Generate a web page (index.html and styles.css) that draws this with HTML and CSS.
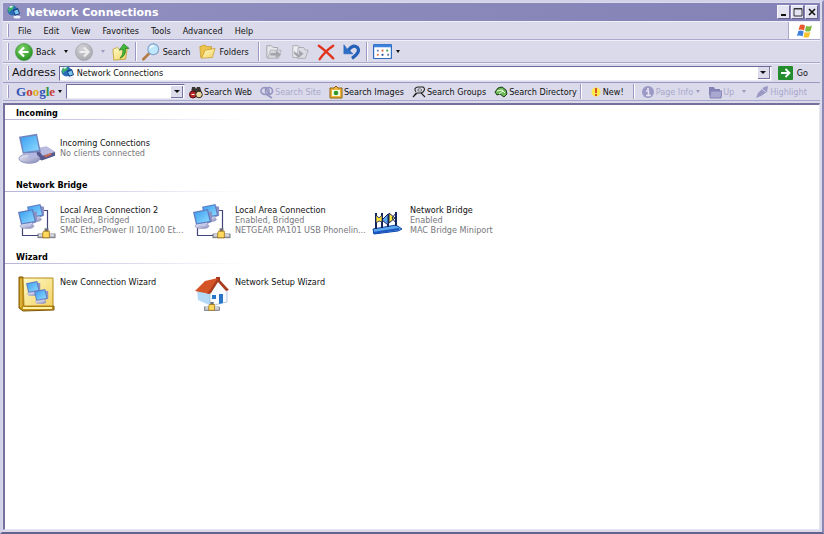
FILE: index.html
```html
<!DOCTYPE html>
<html lang="en">
<head>
<meta charset="utf-8">
<title>Network Connections</title>
<link rel="stylesheet" href="styles.css">
</head>
<body>
<svg class="defs" width="0" height="0" aria-hidden="true">
  <defs>
    <linearGradient id="screen" x1="0" y1="0" x2="1" y2="1"><stop offset="0" stop-color="#3a9df0"/><stop offset="1" stop-color="#8fdcff"/></linearGradient>
    <linearGradient id="shell" x1="0" y1="0" x2="1" y2="1"><stop offset="0" stop-color="#f2f3fc"/><stop offset="1" stop-color="#8285b5"/></linearGradient>
    <radialGradient id="green" cx=".4" cy=".3" r=".8"><stop offset="0" stop-color="#7fd468"/><stop offset="1" stop-color="#1c8a1c"/></radialGradient>
    <radialGradient id="gray" cx=".4" cy=".3" r=".8"><stop offset="0" stop-color="#d4d4d8"/><stop offset="1" stop-color="#a2a2aa"/></radialGradient>
    <linearGradient id="paper" x1="0" y1="0" x2="1" y2="1"><stop offset="0" stop-color="#fffbc8"/><stop offset="1" stop-color="#f3d263"/></linearGradient>
    <symbol id="globe" viewBox="0 0 14 14">
      <circle cx="5.5" cy="5.5" r="5" fill="#2a6cb8"/><path d="M1 4Q3 0 7 1L6 4 3 6 2 8Z" fill="#3fb36a"/><path d="M2 2Q4 0 6 1L4 3Z" fill="#e0f6ee"/>
      <path d="M6 5L11 3 13 9 8 11Z" fill="#123c78"/><path d="M7 6L10.500 4.500 12 8.500 8.500 9.500Z" fill="#7cc8f4"/><ellipse cx="10" cy="12" rx="3.500" ry="1.500" fill="#eef0fa"/>
    </symbol>
    <symbol id="pc" viewBox="0 0 20 20">
      <path d="M14 2L19 3 19 13 14 15Z" fill="#8f93c4"/><ellipse cx="9" cy="17" rx="7" ry="2.800" fill="url(#shell)" stroke="#9699c2" stroke-width=".6"/>
      <path d="M7 13H13V17H8Z" fill="#c5c8e8"/><path d="M0 3L15 0 18 13 3 15.500Z" fill="#5f7cc0"/><path d="M1.500 4L14 1.500 16.500 12 4 14.200Z" fill="url(#screen)"/>
    </symbol>
    <symbol id="plug" viewBox="0 0 20 12">
      <rect x="1" y="6" width="18" height="4" fill="#b9bcc4" stroke="#50535e" stroke-width=".7"/><path d="M2 7H18" stroke="#fff"/><rect x="8" y="0" width="4" height="5" fill="#6f7278"/><path d="M7 3H13V10H6V5Z" fill="#ffd95c" stroke="#98660c" stroke-width=".8"/>
    </symbol>
    <symbol id="lan" viewBox="0 0 38 36">
      <path d="M20 6.500H29.500V26M4.500 24V31.500H20" fill="none" stroke="#42447a" stroke-width="1.200"/>
      <use href="#pc" x="9" y="0" width="18" height="18"/><use href="#pc" x="0" y="5" width="20" height="20"/><use href="#plug" x="19" y="24" width="19" height="12"/>
    </symbol>
    <symbol id="folder" viewBox="0 0 20 18">
      <path d="M2 3L8 1 9 3 15 3 15 13 3 15Z" fill="#ecc44c" stroke="#c2901e" stroke-width=".7"/><path d="M4 16L8 7 19 5 16 15Z" fill="url(#paper)" stroke="#c2901e" stroke-width=".7"/>
    </symbol>
  </defs>
</svg>
<main class="window">
  <header class="titlebar">
    <svg class="i14"><use href="#globe"/></svg>
    <h1>Network Connections</h1>
    <div class="winbtns">
      <button aria-label="Minimize"><svg viewBox="0 0 10 10"><path d="M2 8H7" stroke="#111" stroke-width="2"/></svg></button>
      <button aria-label="Maximize"><svg viewBox="0 0 10 10"><path d="M1 1.500H9V9H1ZM1 2H9" fill="none" stroke="#333"/></svg></button>
      <button aria-label="Close"><svg viewBox="0 0 10 10"><path d="M2 2L8 8M8 2L2 8" stroke="#111" stroke-width="1.600"/></svg></button>
    </div>
  </header>

  <nav class="bar menubar" aria-label="Menu">
    <span class="grip"></span>
    <div class="menus">
      <button>File</button><button>Edit</button><button>View</button><button>Favorites</button><button>Tools</button><button>Advanced</button><button>Help</button>
    </div>
    <div class="flag"><svg width="16" height="14" viewBox="0 0 16 14"><path d="M3 1Q5 0 8 1.500L7 6.500Q4 5 1.500 6Z" fill="#e8582c"/><path d="M9 2Q12 3 15 1.500L13.500 7Q11 8 8 7Z" fill="#7cb93c"/><path d="M1.300 7Q4 6 6.700 7.500L5.500 12.500Q3 11 0 12Z" fill="#3f80dc"/><path d="M7.700 8Q10 9 13.300 8L12 13Q9 14 6.500 13Z" fill="#f6c32c"/></svg></div>
  </nav>

  <div class="bar toolbar" role="toolbar" aria-label="Standard buttons">
    <span class="grip"></span>
    <button class="tool"><svg class="i18" viewBox="0 0 20 20"><circle cx="10" cy="10" r="9.500" fill="url(#green)" stroke="#32872c" stroke-width=".6"/><path d="M10 5L5 10 10 15M5.500 10H15" fill="none" stroke="#fff" stroke-width="2.400"/></svg>Back</button>
    <button class="drop" aria-label="Back history"></button>
    <button class="tool" aria-label="Forward" disabled><svg class="i18" viewBox="0 0 20 20"><circle cx="10" cy="10" r="9.500" fill="url(#gray)" stroke="#9b9ba2" stroke-width=".6"/><path d="M10 5L15 10 10 15M14.500 10H5" fill="none" stroke="#eee" stroke-width="2.400"/></svg></button>
    <button class="drop" aria-label="Forward history" disabled></button>
    <button class="tool" aria-label="Up"><svg class="i18" viewBox="0 0 20 20"><path d="M1 7L6 5 8 7 17 6 15 18 2 19Z" fill="url(#paper)" stroke="#bd951e" stroke-width=".8"/><path d="M9 17Q13 13 12 7L8 8 13 1 19 6 15 6Q16 14 9 17Z" fill="#42b63a" stroke="#177817" stroke-width=".7"/></svg></button>
    <span class="sep"></span>
    <button class="tool"><svg class="i18" viewBox="0 0 20 20"><path d="M1.500 18L8 11.500" stroke="#b47b45" stroke-width="3" stroke-linecap="round"/><circle cx="12.500" cy="7" r="6" fill="#bfe7fb" stroke="#7da1cb" stroke-width="1.200"/><path d="M9 6Q10 3 13 3" stroke="#fff" stroke-width="1.500" fill="none"/></svg>Search</button>
    <button class="tool"><svg class="i18"><use href="#folder"/></svg>Folders</button>
    <div class="tools">
      <span class="sep"></span>
      <button class="tool" aria-label="Move to" disabled><svg class="i18" viewBox="0 0 20 20"><path d="M2 3H7L9 5H14V16H2Z" fill="#e6e6ea" stroke="#a2a2aa"/><path d="M3 17L6 8H18L15 17Z" fill="#d6d6dc" stroke="#a2a2aa" stroke-width=".7"/><path d="M6 11H12V8L18 13 12 17V14H6Z" fill="#a4a4ac"/></svg></button>
      <button class="tool" aria-label="Copy to" disabled><svg class="i18" viewBox="0 0 20 20"><path d="M2 3H8L11 6V16H2Z" fill="#ececf0" stroke="#a8a8b0"/><path d="M8 5H14L16 8H19L16 17H7Z" fill="#dcdce2" stroke="#a8a8b0"/><path d="M3 9L9 13V8L14 12 9 16 4 13Z" fill="#a4a4ac"/></svg></button>
      <button class="tool" aria-label="Delete"><svg class="i18" viewBox="0 0 20 20"><path d="M2 3Q9 8 18 17M18 3Q9 9 3 18" fill="none" stroke="#e0341c" stroke-width="2.600" stroke-linecap="round"/></svg></button>
      <button class="tool" aria-label="Undo"><svg class="i18" viewBox="0 0 20 20"><path d="M6 8Q11 1 16 5 20 10 10 17" fill="none" stroke="#2360b8" stroke-width="3.600"/><path d="M1 2L1 12H11L8 9 4 6Z" fill="#2f6ec8" stroke="#2360b8" stroke-width=".7"/></svg></button>
      <span class="sep"></span>
      <button class="tool" aria-label="Views"><svg width="19" height="15" viewBox="0 0 20 16"><rect x=".5" y=".5" width="19" height="15" rx="1" fill="#fff" stroke="#2d6cc0" stroke-width="1.300"/><path d="M1 2H19" stroke="#3c82dc" stroke-width="3"/><path d="M4 7H6M15 11.500H17" stroke="#6d83a8" stroke-width="2"/><path d="M4 11.500H6" stroke="#e47444" stroke-width="2"/><path d="M9 7H11" stroke="#d85c40" stroke-width="2"/><path d="M9 11.500H11" stroke="#24479c" stroke-width="2"/><path d="M14 7H16" stroke="#3ba04c" stroke-width="2"/></svg></button>
    </div>
    <button class="drop tight" aria-label="Choose view"></button>
  </div>

  <form class="bar addressbar">
    <span class="grip"></span>
    <label for="address">Address</label>
    <div class="field grow"><svg class="i14"><use href="#globe"/></svg><input id="address" value="Network Connections"><button type="button" class="combo" aria-label="Address list"></button></div>
    <button type="button" class="go"><svg width="15" height="14" viewBox="0 0 15 14"><rect width="15" height="14" rx="1" fill="#238c2c"/><path d="M3 7H11M7.500 3L11.500 7 7.500 11" fill="none" stroke="#fff" stroke-width="1.800"/></svg>Go</button>
  </form>

  <form class="bar googlebar">
    <span class="grip"></span>
    <button type="button" class="google" aria-label="Google"><span class="b">G</span><span class="r">o</span><span class="y">o</span><span class="b">g</span><span class="g">l</span><span class="r">e</span></button>
    <button type="button" class="drop tight" aria-label="Google menu"></button>
    <div class="field query"><input aria-label="Search terms"><button type="button" class="combo" aria-label="Recent searches"></button></div>
    <div class="links">
      <button type="button"><svg class="i14" viewBox="0 0 14 14"><path d="M2 8L3 2H6L7 4 8 2H11L13 8 11 11H3Z" fill="#3a3430"/><circle cx="4" cy="9.500" r="3.500" fill="#bc2424" stroke="#501010"/><circle cx="10" cy="9.500" r="3.300" fill="#ebd9a0" stroke="#302820"/><path d="M2.500 9.500H5.500" stroke="#fff"/></svg>Search Web</button>
      <button type="button" disabled><svg class="i14" viewBox="0 0 14 14"><g fill="none" stroke="#9795c2" stroke-width="1.700"><ellipse cx="5" cy="6" rx="4" ry="3.500"/><circle cx="9" cy="6" r="3.500"/><path d="M6 9L12 13M5 3L10 9"/></g></svg>Search Site</button>
      <button type="button"><svg class="i14" viewBox="0 0 14 14"><path d="M1 3H5L7 1 9 3H13V13H1Z" fill="#efb73c" stroke="#8c6010"/><rect x="3" y="5" width="8" height="6" fill="#f4ffe0"/><circle cx="7" cy="8" r="2.300" fill="#2c9a2c"/></svg>Search Images</button>
      <button type="button"><svg class="i14" viewBox="0 0 14 14"><path d="M4 7Q1 3 6 2H11Q14 4 11 7L9 8 13 12M9 8H5L1 12 4 8" fill="none" stroke="#222" stroke-width="1.100"/><path d="M6 4H9Q11 5 9 6H6Z" fill="#fff" stroke="#444" stroke-width=".7"/></svg>Search Groups</button>
      <button type="button"><svg class="i14" viewBox="0 0 14 14"><path d="M1 7L4 3 8 2 12 5 13 9 10 12 6 9 3 10Z" fill="#6fb958" stroke="#173c16"/><path d="M3 6L8 5 11 8M5 9L9 6" stroke="#e7ffe0" fill="none"/></svg>Search Directory</button>
    </div>
    <span class="sep"></span>
    <button type="button" class="new"><svg width="10" height="10" viewBox="0 0 10 10"><circle cx="5" cy="5" r="4.500" fill="#ffe94c"/><path d="M5 1V6M5 7V9" stroke="#d0301c" stroke-width="1.600"/></svg>New!</button>
    <span class="sep"></span>
    <button type="button" class="info" disabled><svg class="i14" viewBox="0 0 14 14"><circle cx="7" cy="7" r="6" fill="#9a98c5"/><path d="M7 3V5M5 6H7.500V10M5 10.500H10" stroke="#e6e5f3" stroke-width="1.600" fill="none"/></svg>Page Info</button>
    <button type="button" class="drop tight" disabled aria-label="Page info menu"></button>
    <button type="button" class="up" disabled><svg class="i14" viewBox="0 0 14 14"><path d="M1 12V2H6L7 4H12V6H3Z" fill="#8583b5"/><path d="M3 6H14L13 13H2Z" fill="#aaa8d0" stroke="#8583b5"/></svg>Up</button>
    <button type="button" class="drop wide" disabled aria-label="Up menu"></button>
    <button type="button" disabled><svg class="i14" viewBox="0 0 14 14"><path d="M1 13L3 8 9 2 13 1 12 7 6 11Z" fill="#9a98c5"/><path d="M7 4L11 7" stroke="#d5d4e8"/></svg>Highlight</button>
  </form>

  <section class="content">
    <h2>Incoming</h2>
    <ul class="tiles centered">
      <li><svg class="icon" viewBox="0 0 40 36"><path d="M21 17L31 15 39 20V24L25 29 17 25Z" fill="#55588c"/><path d="M20 16L30 14 39 20 26 24Z" fill="#b9bbdf"/><path d="M28 25L35 22" stroke="#d66b4c" stroke-width="2"/><ellipse cx="12" cy="27" rx="11" ry="5" fill="url(#shell)" stroke="#8f92bd"/><path d="M11 19H19L21 26 11 27Z" fill="#b4b8e0"/><path d="M1 4L20 1 24 20 5 22Z" fill="#7184bd"/><path d="M3 5L19 3 22 18 6 20Z" fill="url(#screen)"/></svg><div><a href="#">Incoming Connections</a><p>No clients connected</p></div></li>
    </ul>
    <h2>Network Bridge</h2>
    <ul class="tiles">
      <li><svg class="icon"><use href="#lan"/></svg><div><a href="#">Local Area Connection 2</a><p>Enabled, Bridged</p><p>SMC EtherPower II 10/100 Et...</p></div></li>
      <li><svg class="icon"><use href="#lan"/></svg><div><a href="#">Local Area Connection</a><p>Enabled, Bridged</p><p>NETGEAR PA101 USB Phonelin...</p></div></li>
      <li><svg class="icon" viewBox="0 0 38 36"><path d="M5 25L28 21 34 25 30 27 6 30Z" fill="#5ba6ea" stroke="#1146a8"/><path d="M5 29L31 25" stroke="#1a56c0" stroke-width="2"/><path d="M8 9V25M14 9V24M20 10V23M28 8V22" stroke="#14245c" stroke-width="2"/><path d="M8 11L11 14 14 11V18L11 17 8 19Z" fill="#ffe538" stroke="#14245c" stroke-width=".8"/><path d="M14 16L20 10V21Z" fill="#5ba6ea" stroke="#14245c"/><path d="M21 9L27 14 21 19Z" fill="#ffe538" stroke="#14245c"/><path d="M28 9L24 14 28 19" fill="none" stroke="#14245c"/></svg><div><a href="#">Network Bridge</a><p>Enabled</p><p>MAC Bridge Miniport</p></div></li>
    </ul>
    <h2>Wizard</h2>
    <ul class="tiles">
      <li><svg class="icon" viewBox="0 0 38 36"><path d="M1 1H5L6 30H36V34L5 35 1 32Z" fill="#c69319" stroke="#805908"/><path d="M5 2H35V30H6Z" fill="url(#paper)" stroke="#b58a16"/><path d="M5 32H34" stroke="#fff1a5" stroke-width="2"/><path d="M3 3V31" stroke="#efcf52"/><use href="#pc" x="8" y="5" width="15" height="15"/><use href="#pc" x="16" y="13" width="15" height="15"/></svg><div><a href="#">New Connection Wizard</a></div></li>
      <li><svg class="icon" viewBox="0 0 38 36"><path d="M23 1H27V12H23Z" fill="#a4341b"/><path d="M4 14L17 9 20 26 18 30 5 24Z" fill="#b4daf8"/><path d="M17 17L25 5 34 15V26L17 30Z" fill="#f8fbff" stroke="#99b4d8" stroke-width=".7"/><path d="M2 15L12 5 25 2 17 18Z" fill="#d55427"/><path d="M25 2L36 14 33 15 25 6 18 17 14 18Z" fill="#a93b1e"/><path d="M19 19H23V23H19ZM26 18H30V27L26 28Z" fill="#2776c8"/><use href="#plug" x="6" y="26" width="26" height="10"/></svg><div><a href="#">Network Setup Wizard</a></div></li>
    </ul>
  </section>
</main>
</body>
</html>
```

FILE: styles.css
```css
* { box-sizing: border-box; }
body {
  margin: 0;
  font: 9px/10px "DejaVu Sans Condensed", "DejaVu Sans", sans-serif;
  color: #111;
}
.defs { display: block; height: 0; }
.window {
  min-height: 100vh;
  display: flex;
  flex-direction: column;
  background: #dadaea;
  border: 2px solid #d2d1ea;
  border-right-color: #8a88b4;
  border-bottom-color: #65628e;
  padding: 1px 2px 2px 1px;
}
button {
  display: flex;
  align-items: center;
  gap: 1px;
  padding: 0;
  border: 0;
  background: none;
  color: inherit;
  font: inherit;
  white-space: nowrap;
}
button:disabled { color: #aaa8cc; }
svg { flex: none; display: block; }
.i14 { width: 14px; height: 14px; }
.i18 { width: 18px; height: 18px; }

.titlebar {
  display: flex;
  align-items: center;
  gap: 5px;
  height: 18px;
  padding: 0 2px 0 4px;
  background: linear-gradient(90deg, #918fc0, #8482b6);
  color: #fff;
}
h1 { flex: 1; margin: 0; padding-top: 1px; font: bold 11px/14px "DejaVu Sans", sans-serif; }
.winbtns { display: flex; gap: 1px; }
.winbtns button {
  width: 13px;
  height: 14px;
  justify-content: center;
  background: #e4e3f2;
  border: 1px solid #f6f6fc;
  border-right-color: #66638f;
  border-bottom-color: #66638f;
}
.winbtns svg { width: 10px; height: 10px; }

.bar {
  display: flex;
  align-items: center;
  height: 19px;
  padding-left: 4px;
  border-top: 1px solid #f0f0fa;
  border-bottom: 1px solid #a9a7cc;
}
.grip { align-self: stretch; width: 2px; margin: 2px 0; border-left: 1px solid #fff; border-right: 1px solid #9b99c4; }
.sep { align-self: stretch; width: 2px; margin: 1px 0; border-left: 1px solid #9b99c4; border-right: 1px solid #fff; }
.drop { width: 5px; height: 8px; margin: 0 2px 0 4px; }
.drop::before { content: ""; border: 2px solid transparent; border-top: 3px solid #111; border-bottom: 0; }
.drop:disabled::before { border-top-color: #9b99c0; }
.drop.tight { margin: 0 3px; }
.drop.wide { margin: 0 8px; }

.menubar { justify-content: space-between; }
.menus { flex: 1; display: flex; gap: 12px; padding-left: 9px; }
.flag { align-self: stretch; width: 32px; display: grid; place-items: center; background: #fff; border-left: 1px solid #a9a7cc; }

.toolbar { height: 23px; }
.toolbar .grip { margin-right: 2px; }
.toolbar .tool { gap: 3px; margin: 0 4px; }
.toolbar .sep { margin: 1px; }
.tools { align-self: stretch; display: flex; align-items: center; margin-left: 4px; }
.toolbar .drop.tight { margin: 0; }

.addressbar { gap: 3px; border-bottom: 0; }
.addressbar label { font: 11px/14px "DejaVu Sans", sans-serif; }
.field {
  display: flex;
  align-items: center;
  height: 15px;
  padding: 1px;
  background: #fff;
  border: 1px solid #6d6a9a;
  border-right-color: #e9e8f5;
  border-bottom-color: #e9e8f5;
}
.grow { flex: 1; }
.field input {
  flex: 1;
  min-width: 0;
  width: 0;
  height: 11px;
  padding: 0 2px;
  border: 0;
  background: none;
  font: inherit;
  color: inherit;
}
.combo {
  width: 12px;
  height: 12px;
  justify-content: center;
  background: #dcdcec;
  border-right: 1px solid #77749e;
  border-bottom: 1px solid #77749e;
}
.combo::before { content: ""; border: 3px solid transparent; border-top-color: #111; border-bottom: 0; }
.go { gap: 4px; padding: 0 12px 0 3px; }

.googlebar { border-top-color: #9b99c4; }
.google { gap: 0; margin-left: 7px; font: 13px/14px "Liberation Serif", serif; -webkit-text-stroke: 0; font-weight: bold; }
.b { color: #3355b4; }
.r { color: #c83a34; }
.y { color: #e0ac20; }
.g { color: #36924a; }
.query { width: 119px; }
.links { display: flex; gap: 8px; padding: 0 3px 0 4px; }
.new { gap: 2px; padding: 0 9px; }
.info { margin-left: 6px; }
.up { margin-left: 4px; }

.content {
  flex: 1;
  margin-top: 2px;
  padding-top: 3px;
  background: #fff;
  border: 1px solid #e6e5f2;
  border-top: 2px solid #74719f;
  border-left: 2px solid #74719f;
}
h2 {
  margin: 0;
  padding: 0 0 0 11px;
  height: 12px;
  font: bold 9px/10px "DejaVu Sans Condensed", sans-serif;
  color: #000;
  border-bottom: 1px solid;
  border-image: linear-gradient(90deg, #b5b3da, #fff 240px) 1;
}
.tiles {
  display: grid;
  grid-template-columns: repeat(auto-fill, 175px);
  height: 60px;
  margin: 0;
  padding: 12px 0 0 13px;
  list-style: none;
}
.tiles li { display: flex; gap: 4px; align-items: flex-start; min-width: 0; }
.icon { width: 38px; height: 36px; }
.tiles li div { padding-top: 1px; white-space: nowrap; }
.tiles.centered li div { padding-top: 6px; }
.tiles a { color: inherit; text-decoration: none; }
.tiles p { margin: 0; color: #77777c; }
```
